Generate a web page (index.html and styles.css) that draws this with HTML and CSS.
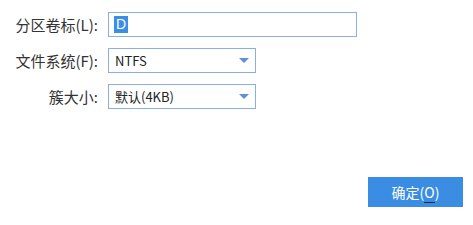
FILE: index.html
```html
<!DOCTYPE html>
<html lang="zh-CN">
<head>
<meta charset="utf-8">
<link rel="stylesheet" href="styles.css">
</head>
<body>
<div class="dialog">
  <div class="form">
    <label class="label">分区卷标(L):</label>
    <div class="field input wide"><span class="sel">D</span></div>
    <label class="label">文件系统(F):</label>
    <div class="field select"><span class="val">NTFS</span><span class="arrow"></span></div>
    <label class="label">簇大小:</label>
    <div class="field select"><span class="val">默认(4KB)</span><span class="arrow"></span></div>
  </div>
  <div class="footer">
    <button class="btn">确定(<u>O</u>)</button>
  </div>
</div>
</body>
</html>
```
FILE: styles.css
```css
html, body {
  margin: 0;
  padding: 0;
  background: #ffffff;
}
body {
  width: 473px;
  height: 225px;
  font-family: "Noto Sans CJK SC", "Liberation Sans", sans-serif;
  font-size: 13px;
  color: #333333;
}
.dialog {
  display: flex;
  flex-direction: column;
  height: 225px;
}
.form {
  display: grid;
  grid-template-columns: 98px auto;
  column-gap: 10px;
  row-gap: 11px;
  padding-top: 12px;
  align-items: center;
}
.label {
  text-align: right;
  line-height: 25px;
  white-space: nowrap;
  color: #333;
  font-size: 15px;
}
.field {
  box-sizing: border-box;
  height: 25px;
  border: 1px solid #8aaee6;
  background: #fff;
  display: flex;
  align-items: center;
}
.wide {
  width: 249px;
}
.input {
  padding-left: 5px;
}
.sel {
  background: #3a8ee6;
  color: #ffffff;
  line-height: 17px;
  padding: 0 2px;
  font-family: "Liberation Sans", sans-serif;
  font-size: 14px;
}
.select {
  width: 148px;
  justify-content: space-between;
  padding: 0 6px 0 6px;
}
.val {
  color: #222;
  font-size: 13px;
}
.arrow {
  width: 0;
  height: 0;
  border-left: 5px solid transparent;
  border-right: 5px solid transparent;
  border-top: 5px solid #5f8fd6;
}
.footer {
  display: flex;
  justify-content: flex-end;
  padding-right: 10px;
  margin-top: 68px;
}
.btn {
  width: 95px;
  height: 30px;
  border: none;
  background: #3a8de2;
  color: #ffffff;
  font-family: "Noto Sans CJK SC", "Liberation Sans", sans-serif;
  font-size: 14px;
  padding: 0;
  cursor: default;
}
.btn u {
  text-decoration: none;
  border-bottom: 1px solid #1a2a40;
}
```
